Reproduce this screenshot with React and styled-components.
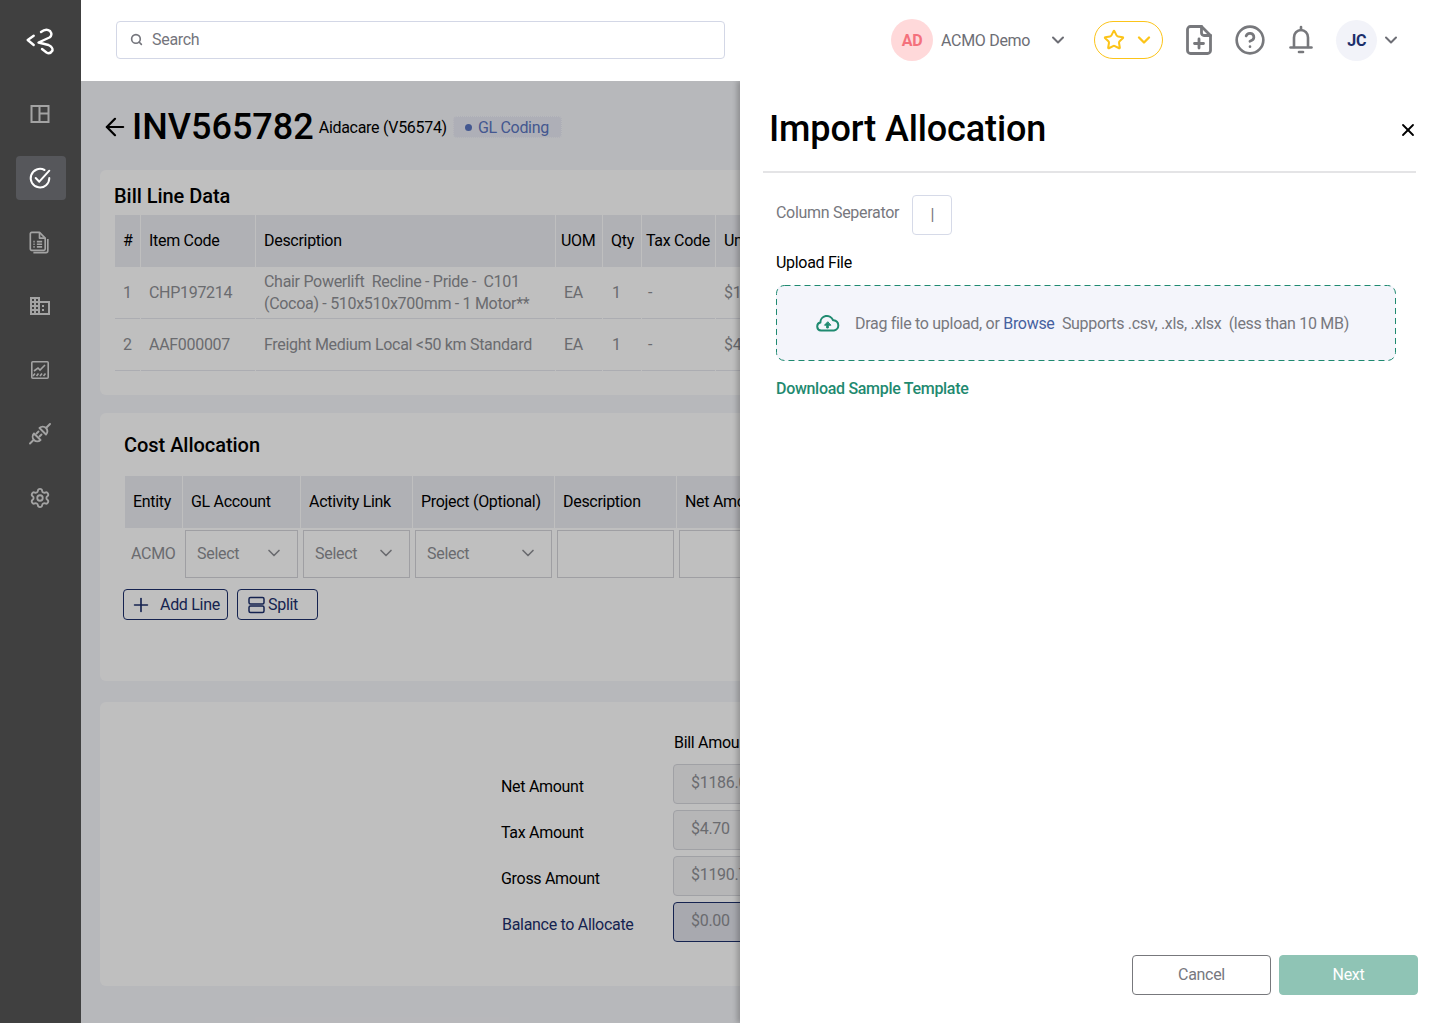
import { Fragment } from "react";
import styled, { createGlobalStyle } from "styled-components";
import { ArrowLeft, ChevronDown, CircleHelp, Plus, Search, Settings, Star, X } from "lucide-react";

const GlobalStyle = createGlobalStyle`
  html, body { margin: 0; padding: 0; }
  body { font-family: Roboto, "Liberation Sans", sans-serif; font-size: 16px; letter-spacing: -0.3px; color: #000; background: #fff; }
  * { box-sizing: border-box; }
`;

const Shell = styled.div`
  display: flex;
  width: 1440px;
  height: 1023px;
  overflow: hidden;
`;

const Sidebar = styled.aside`
  flex: 0 0 81px;
  display: flex;
  flex-direction: column;
  align-items: center;
  background: #404040;
`;

const LogoBox = styled.div`
  height: 92px;
  width: 100%;
  display: flex;
  align-items: center;
  justify-content: center;
  padding: 0 0 8px 0;
`;

const NavList = styled.nav`
  display: flex;
  flex-direction: column;
  gap: 20px;
`;

const NavItem = styled.div`
  width: 50px;
  height: 44px;
  border-radius: 4px;
  display: flex;
  align-items: center;
  justify-content: center;
  padding-right: 2px;
  color: ${(p) => (p.$active ? "#ffffff" : "#a3a3a3")};
  background: ${(p) => (p.$active ? "#56575b" : "transparent")};
`;

const Main = styled.div`
  flex: 1;
  display: flex;
  flex-direction: column;
  min-width: 0;
`;

const TopBar = styled.header`
  flex: 0 0 81px;
  display: flex;
  align-items: center;
  padding: 0 0 1px 35px;
  background: #fff;
`;

const SearchBox = styled.div`
  width: 609px;
  height: 38px;
  display: flex;
  align-items: center;
  gap: 9px;
  padding: 0 0 2px 13px;
  border: 1px solid #d3d7e6;
  border-radius: 4px;
  color: #74757c;
  font-size: 16px;
`;

const Avatar = styled.div`
  flex: none;
  width: ${(p) => p.$size}px;
  height: ${(p) => p.$size}px;
  border-radius: 50%;
  display: flex;
  align-items: center;
  justify-content: center;
  font-weight: 700;
  font-size: 16px;
  background: ${(p) => p.$bg};
  color: ${(p) => p.$fg};
`;

const CompanyGroup = styled.div`
  display: flex;
  align-items: center;
  margin-left: 166px;
  color: #6d6e75;
`;

const CompanyName = styled.span`
  margin: 0 18px 0 8px;
  white-space: nowrap;
`;

const FavouritePill = styled.div`
  width: 69px;
  height: 38px;
  margin-left: 26px;
  border: 1px solid #fcc419;
  border-radius: 19px;
  display: flex;
  align-items: center;
  justify-content: space-between;
  padding: 0 8px;
  color: #fcc419;
`;

const HeaderIcons = styled.div`
  display: flex;
  align-items: center;
  gap: 22px;
  margin-left: 23px;
  color: #77787c;
`;

const UserGroup = styled.div`
  display: flex;
  align-items: center;
  gap: 4px;
  margin-left: 22px;
  color: #6d6e75;
`;

const Body = styled.div`
  position: relative;
  flex: 1;
  overflow: hidden;
  background: #f5f6fa;
`;

const Content = styled.div`
  width: 1340px;
  padding: 20px 0 0 19px;
`;

const TitleRow = styled.div`
  height: 52px;
  display: flex;
  align-items: center;
  margin-bottom: 17px;
  padding-left: 1px;
`;

const InvoiceNumber = styled.h1`
  margin: 0 5px 0 3px;
  font-size: 36px;
  font-weight: 500;
  line-height: 52px;
  letter-spacing: 0;
`;

const Vendor = styled.span`
  font-size: 16px;
  margin-right: 6px;
`;

const StatusBadge = styled.span`
  display: inline-flex;
  align-items: center;
  gap: 6px;
  height: 22px;
  padding: 0 12px 0 11px;
  border-radius: 4px;
  border: 1px dotted #f7f8fc;
  background: #e8eaf4;
  color: #5a75c0;
  font-size: 16px;
  &::before {
    content: "";
    width: 7px;
    height: 7px;
    border-radius: 50%;
    background: #5a75c0;
  }
`;

const Card = styled.section`
  background: #fff;
  border-radius: 6px;
  margin-bottom: ${(p) => p.$gap ?? 18}px;
  padding: ${(p) => p.$padding};
`;

const CardTitle = styled.h2`
  margin: ${(p) => p.$margin};
  font-size: 20px;
  font-weight: 500;
  line-height: 24px;
  letter-spacing: -0.04px;
`;

const GridRow = styled.div`
  display: grid;
  grid-template-columns: ${(p) => p.$cols};
  column-gap: 1px;
`;

const HeadCell = styled.div`
  height: 52px;
  display: flex;
  align-items: center;
  padding: 0 0 2px ${(p) => p.$pad ?? 8}px;
  background: #ebecf2;
  font-size: 16px;
  white-space: nowrap;
  overflow: hidden;
`;

const BodyCell = styled.div`
  height: 52px;
  display: flex;
  align-items: center;
  padding-left: ${(p) => p.$pad ?? 8}px;
  border-bottom: 1px solid #e6e7ee;
  color: #8e8f94;
  font-size: 16px;
  line-height: 22px;
  white-space: pre-wrap;
`;

const FormRow = styled.div`
  display: grid;
  grid-template-columns: 55px 113px 107px 137px 117px 200px;
  column-gap: 5px;
  margin-top: 2px;
  height: 48px;
  color: #8e8f94;
`;

const EntityCell = styled.div`
  display: flex;
  align-items: center;
  padding: 0 0 2px 6px;
`;

const FieldBox = styled.div`
  display: flex;
  align-items: center;
  justify-content: space-between;
  padding: 0 13px 2px 11px;
  border: 1px solid #d4d5da;
`;

const ButtonRow = styled.div`
  display: flex;
  gap: 9px;
  margin: 11px 0 0 -2px;
`;

const OutlineButton = styled.button`
  width: ${(p) => p.$width}px;
  height: 31px;
  display: flex;
  align-items: center;
  gap: ${(p) => p.$gap}px;
  padding: 0 0 0 ${(p) => p.$pad}px;
  border: 1px solid #1c2f6b;
  border-radius: 4px;
  background: transparent;
  color: #1c2f6b;
  font: 16px Roboto, sans-serif;
  letter-spacing: inherit;
`;

const SummaryGrid = styled.div`
  display: grid;
  grid-template-columns: 172px 200px;
  grid-template-rows: 28px repeat(4, 40px);
  row-gap: 6px;
`;

const SummaryHead = styled.div`
  grid-column: 2;
  line-height: 24px;
  padding: 1px 0 0 1px;
  white-space: nowrap;
`;

const SummaryLabel = styled.div`
  display: flex;
  align-items: center;
  padding: 5px 0 0 ${(p) => (p.$accent ? 1 : 0)}px;
  color: ${(p) => (p.$accent ? "#1c2f6b" : "#000")};
`;

const AmountBox = styled.div`
  display: flex;
  align-items: center;
  padding: 0 0 4px 17px;
  border: 1px solid ${(p) => (p.$accent ? "#1c2f6b" : "#d6d7dc")};
  border-radius: 4px;
  background: ${(p) => (p.$accent ? "#e0e2ea" : "#f3f3f5")};
  color: #8e8f94;
`;

const Overlay = styled.div`
  position: absolute;
  inset: 0;
  background: rgba(0, 0, 0, 0.25);
`;

const Drawer = styled.aside`
  position: absolute;
  top: 0;
  right: 0;
  bottom: 0;
  width: 700px;
  display: flex;
  flex-direction: column;
  padding: 0 24px 28px 23px;
  background: #fff;
  box-shadow: -3px 0 5px rgba(0, 0, 0, 0.22);
`;

const DrawerHead = styled.div`
  height: 92px;
  flex: none;
  display: flex;
  align-items: center;
  justify-content: space-between;
  padding: 8px 0 0 6px;
  border-bottom: 2px solid #e4e4e6;
  svg {
    margin-right: -2px;
  }
`;

const DrawerTitle = styled.h2`
  margin: 0;
  font-size: 36px;
  font-weight: 500;
  letter-spacing: -0.12px;
  padding-bottom: 2px;
`;

const DrawerBody = styled.div`
  flex: 1;
  padding: 22px 20px 0 13px;
`;

const SeparatorRow = styled.div`
  display: flex;
  align-items: flex-start;
  gap: 13px;
  color: #77787e;
  line-height: 36px;
`;

const SeparatorInput = styled.div`
  width: 40px;
  height: 40px;
  display: flex;
  align-items: center;
  justify-content: center;
  border: 1px solid #d6dae8;
  border-radius: 4px;
`;

const FieldLabel = styled.div`
  margin: 16px 0 10px;
  line-height: 24px;
`;

const DropZone = styled.div`
  position: relative;
  height: 76px;
  display: flex;
  align-items: center;
  gap: 15px;
  padding-left: 40px;
  border-radius: 8px;
  background: #f4f5fb;
  color: #77787e;
  white-space: pre;
`;

const DashedEdge = styled.svg`
  position: absolute;
  inset: 0;
  width: 100%;
  height: 100%;
`;

const BrowseLink = styled.span`
  color: #46619f;
`;

const SampleLink = styled.div`
  margin-top: 16px;
  font-weight: 500;
  color: #1f8a70;
  line-height: 24px;
`;

const DrawerFooter = styled.div`
  display: flex;
  justify-content: flex-end;
  gap: 8px;
  margin-right: -2px;
`;

const FooterButton = styled.button`
  width: 139px;
  height: 40px;
  padding: 0 0 2px;
  border-radius: 4px;
  font: 16px Roboto, sans-serif;
  letter-spacing: inherit;
  border: 1px solid ${(p) => (p.$primary ? "#8fc4b5" : "#77787c")};
  background: ${(p) => (p.$primary ? "#8fc4b5" : "#fff")};
  color: ${(p) => (p.$primary ? "#fff" : "#77787e")};
`;

const Logo = () => (
  <svg width="32" height="32" viewBox="24 26 32 32" fill="none" stroke="#fff" strokeWidth="2.4" strokeLinecap="round" strokeLinejoin="round">
    <path d="M32.7 35.7 L26.7 40 L32.7 45" />
    <path d="M40 32 Q45 28 49 31 Q52 35 48.5 37.5 L37.5 42.5 L47.5 45 Q52 47 51.5 50.5 Q49 54.5 45.5 52.5 L41 49" />
  </svg>
);

const PanelIcon = () => (
  <svg width="20" height="20" viewBox="0 0 20 20" fill="none" stroke="currentColor" strokeWidth="2">
    <rect x="1.5" y="2" width="17" height="16" />
    <path d="M9.5 2v16M9.5 9.5h9" />
  </svg>
);

const CheckIcon = () => (
  <svg width="24" height="24" viewBox="0 0 24 24" fill="none" stroke="currentColor" strokeWidth="2" strokeLinecap="round" strokeLinejoin="round">
    <path d="M21.3 12A9.3 9.3 0 1 1 16.5 4" />
    <path d="M7.7 12l3.6 3.7 10-11" />
  </svg>
);

const DocsIcon = () => (
  <svg width="21" height="23" viewBox="0 0 24 26" fill="none" stroke="currentColor" strokeWidth="1.9" strokeLinejoin="round">
    <path d="M3 1.5h9l6.5 6.5v12.5a1.5 1.5 0 0 1-1.5 1.5H3a1.5 1.5 0 0 1-1.5-1.5V3A1.5 1.5 0 0 1 3 1.5z" />
    <path d="M12 1.5V8h6.5" />
    <path d="M21.5 9v13.5a2 2 0 0 1-2 2H5" />
    <path d="M9 12h6M9 15h6M9 18h6M5 12h1.5M5 15h1.5M5 18h1.5" />
  </svg>
);

const BuildingIcon = () => (
  <svg width="20" height="18" viewBox="0 0 20 18" fill="currentColor">
    <path fillRule="evenodd" d="M0 0h10v4h10v14H0zM2 2v2h2V2zm4 0v2h2V2zM2 6v2h2V6zm4 0v2h2V6zM2 10v2h2v-2zm4 0v2h2v-2zM2 14v2h2v-2zm4 0v2h2v-2zm4-8v10h8V6zm2 2h2v2h-2zm0 4h2v2h-2z" />
  </svg>
);

const ChartIcon = () => (
  <svg width="18" height="18" viewBox="0 0 18 18" fill="none" stroke="currentColor" strokeWidth="1.6">
    <rect x="0.8" y="0.8" width="16.4" height="16.4" rx="1" />
    <path d="M3 10l4-3 2 2 5-5" />
    <path d="M2 15l2-2.5M5.5 15l2-2.5M9 15l2-2.5M12.5 15l2-2.5" />
  </svg>
);

const PlugIcon = () => (
  <svg width="22" height="22" viewBox="0 0 22 22" fill="none" stroke="currentColor" strokeWidth="1.9" strokeLinecap="round" strokeLinejoin="round">
    <path d="M1 20.5l3-3" />
    <path d="M5 10.5l6.5 6.5a4.5 4.5 0 0 1-6.5-6.5z" />
    <path d="M10.5 5L17 11.5a4.5 4.5 0 0 0 0-6.5 4.5 4.5 0 0 0-6.5 0z" />
    <path d="M21 1l-3.5 3.5" />
    <path d="M7.5 10.5l2-2M10.5 13.5l2-2" />
  </svg>
);

const FileAddIcon = () => (
  <svg width="26" height="30" viewBox="0 0 26 30" fill="none" stroke="currentColor" strokeWidth="2.8" strokeLinecap="round" strokeLinejoin="round">
    <path d="M4.5 1.5h11l9 9v15a3 3 0 0 1-3 3h-17a3 3 0 0 1-3-3v-21a3 3 0 0 1 3-3z" />
    <path d="M15.5 1.5V8a2.5 2.5 0 0 0 2.5 2.5h6.5" />
    <path d="M13 14v9M8.5 18.5h9" />
  </svg>
);

const BellIcon = () => (
  <svg width="26" height="30" viewBox="0 0 26 30" fill="none" stroke="currentColor" strokeWidth="2.6" strokeLinecap="round" strokeLinejoin="round">
    <path d="M13 2v3" />
    <path d="M6 22V12.5a7 7.5 0 0 1 14 0V22" />
    <path d="M2.5 22.5h21" />
    <path d="M11 27h4" />
  </svg>
);

const SplitIcon = () => (
  <svg width="18" height="18" viewBox="0 0 18 18" fill="none" stroke="currentColor" strokeWidth="1.5">
    <rect x="1" y="1.5" width="15" height="6.5" rx="1.5" />
    <rect x="1" y="10" width="15" height="6.5" rx="1.5" />
  </svg>
);

const CloudUpload = () => (
  <svg width="24" height="18" viewBox="0 0 24 18" fill="none" stroke="#1f8a70" strokeWidth="2" strokeLinecap="round" strokeLinejoin="round">
    <path d="M6 16.5H5a4 4 0 0 1-.6-7.9A6.5 6.5 0 0 1 17 6.2h.6a5.2 5.2 0 0 1 .4 10.3H6z" />
    <path d="M11.5 8L8.5 11.2H10.7V14H12.3V11.2H14.5z" fill="#1f8a70" strokeWidth="1" />
  </svg>
);

const billCols = "25px 114px 299px 46px 38px 73px 120px 120px 120px";
const costCols = "57px 117px 111px 141px 121px 200px";

const billRows = [
  { no: "1", code: "CHP197214", desc: "Chair Powerlift  Recline - Pride -  C101\n(Cocoa) - 510x510x700mm - 1 Motor**", price: "$1186.00" },
  { no: "2", code: "AAF000007", desc: "Freight Medium Local <50 km Standard", price: "$4.70" },
];

const summaryRows = [
  { label: "Net Amount", value: "$1186.00" },
  { label: "Tax Amount", value: "$4.70" },
  { label: "Gross Amount", value: "$1190.70" },
  { label: "Balance to Allocate", value: "$0.00", accent: true },
];

const App = () => {
  return (
    <Shell>
      <GlobalStyle />
      <Sidebar>
        <LogoBox>
          <Logo />
        </LogoBox>
        <NavList>
          <NavItem><PanelIcon /></NavItem>
          <NavItem $active><CheckIcon /></NavItem>
          <NavItem><DocsIcon /></NavItem>
          <NavItem><BuildingIcon /></NavItem>
          <NavItem><ChartIcon /></NavItem>
          <NavItem><PlugIcon /></NavItem>
          <NavItem><Settings size={22} strokeWidth={2} /></NavItem>
        </NavList>
      </Sidebar>
      <Main>
        <TopBar>
          <SearchBox>
            <Search size={13} strokeWidth={3} />
            Search
          </SearchBox>
          <CompanyGroup>
            <Avatar $size={42} $bg="#ffd9da" $fg="#f4717c">AD</Avatar>
            <CompanyName>ACMO Demo</CompanyName>
            <ChevronDown size={20} strokeWidth={2.4} />
          </CompanyGroup>
          <FavouritePill>
            <Star size={22} strokeWidth={2.2} />
            <ChevronDown size={20} strokeWidth={2.8} />
          </FavouritePill>
          <HeaderIcons>
            <FileAddIcon />
            <CircleHelp size={32} strokeWidth={2} />
            <BellIcon />
          </HeaderIcons>
          <UserGroup>
            <Avatar $size={41} $bg="#f2f3f9" $fg="#1c2f6b">JC</Avatar>
            <ChevronDown size={20} strokeWidth={2.4} />
          </UserGroup>
        </TopBar>
        <Body>
          <Content>
            <TitleRow>
              <ArrowLeft size={28} strokeWidth={1.9} />
              <InvoiceNumber>INV565782</InvoiceNumber>
              <Vendor>Aidacare (V56574)</Vendor>
              <StatusBadge>GL Coding</StatusBadge>
            </TitleRow>
            <Card $padding="14px 0 24px 15px">
              <CardTitle $margin="0 0 7px -1px">Bill Line Data</CardTitle>
              <GridRow $cols={billCols}>
                <HeadCell>#</HeadCell>
                <HeadCell>Item Code</HeadCell>
                <HeadCell>Description</HeadCell>
                <HeadCell $pad={5}>UOM</HeadCell>
                <HeadCell>Qty</HeadCell>
                <HeadCell $pad={4}>Tax Code</HeadCell>
                <HeadCell>Unit Price</HeadCell>
                <HeadCell>Net Amount</HeadCell>
                <HeadCell>Tax Amount</HeadCell>
              </GridRow>
              {billRows.map((row) => (
                <GridRow $cols={billCols} key={row.no}>
                  <BodyCell>{row.no}</BodyCell>
                  <BodyCell>{row.code}</BodyCell>
                  <BodyCell>{row.desc}</BodyCell>
                  <BodyCell>EA</BodyCell>
                  <BodyCell $pad={9}>1</BodyCell>
                  <BodyCell $pad={6}>-</BodyCell>
                  <BodyCell>{row.price}</BodyCell>
                  <BodyCell>{row.price}</BodyCell>
                  <BodyCell>-</BodyCell>
                </GridRow>
              ))}
            </Card>
            <Card $padding="20px 0 61px 25px" $gap={21}>
              <CardTitle $margin="0 0 19px -1px">Cost Allocation</CardTitle>
              <GridRow $cols={costCols}>
                <HeadCell>Entity</HeadCell>
                <HeadCell>GL Account</HeadCell>
                <HeadCell>Activity Link</HeadCell>
                <HeadCell>Project (Optional)</HeadCell>
                <HeadCell>Description</HeadCell>
                <HeadCell>Net Amount</HeadCell>
              </GridRow>
              <FormRow>
                <EntityCell>ACMO</EntityCell>
                <FieldBox>Select<ChevronDown size={20} strokeWidth={2} /></FieldBox>
                <FieldBox>Select<ChevronDown size={20} strokeWidth={2} /></FieldBox>
                <FieldBox>Select<ChevronDown size={20} strokeWidth={2} /></FieldBox>
                <FieldBox />
                <FieldBox />
              </FormRow>
              <ButtonRow>
                <OutlineButton $width={105} $gap={8} $pad={6}><Plus size={22} strokeWidth={1.8} />Add Line</OutlineButton>
                <OutlineButton $width={81} $gap={2} $pad={10}><SplitIcon />Split</OutlineButton>
              </ButtonRow>
            </Card>
            <Card $padding="28px 0 44px 401px" $gap={0}>
              <SummaryGrid>
                <SummaryHead>Bill Amount</SummaryHead>
                {summaryRows.map((row) => (
                  <Fragment key={row.label}>
                    <SummaryLabel $accent={row.accent}>{row.label}</SummaryLabel>
                    <AmountBox $accent={row.accent}>{row.value}</AmountBox>
                  </Fragment>
                ))}
              </SummaryGrid>
            </Card>
          </Content>
          <Overlay />
          <Drawer>
            <DrawerHead>
              <DrawerTitle>Import Allocation</DrawerTitle>
              <X size={20} strokeWidth={2.2} />
            </DrawerHead>
            <DrawerBody>
              <SeparatorRow>
                Column Seperator
                <SeparatorInput>|</SeparatorInput>
              </SeparatorRow>
              <FieldLabel>Upload File</FieldLabel>
              <DropZone>
                <DashedEdge>
                  <rect x="0.5" y="0.5" width="619" height="75" rx="8" fill="none" stroke="#1f8a70" strokeDasharray="6 4" />
                </DashedEdge>
                <CloudUpload />
                <span>Drag file to upload, or <BrowseLink>Browse</BrowseLink>  Supports .csv, .xls, .xlsx  (less than 10 MB)</span>
              </DropZone>
              <SampleLink>Download Sample Template</SampleLink>
            </DrawerBody>
            <DrawerFooter>
              <FooterButton>Cancel</FooterButton>
              <FooterButton $primary>Next</FooterButton>
            </DrawerFooter>
          </Drawer>
        </Body>
      </Main>
    </Shell>
  );
};

export default App;
